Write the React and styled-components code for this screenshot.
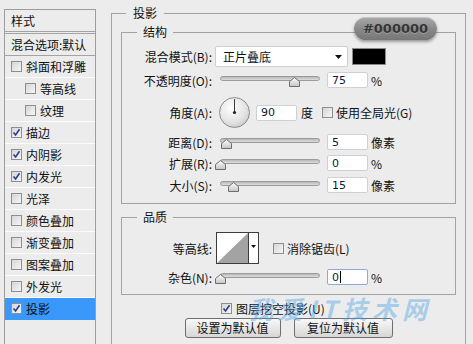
import React from 'react'
import styled, { createGlobalStyle } from 'styled-components'

const GlobalStyle = createGlobalStyle`
  html, body {
    margin: 0;
    padding: 0;
    background: #ececec;
  }
  body {
    font-family: "Noto Sans CJK SC", "Noto Sans", sans-serif;
    font-size: 12px;
    color: #111;
  }
`

const layers = [
    { name: '斜面和浮雕' },
    { name: '等高线', indent: true },
    { name: '纹理', indent: true },
    { name: '描边', checked: true },
    { name: '内阴影', checked: true },
    { name: '内发光', checked: true },
    { name: '光泽' },
    { name: '颜色叠加' },
    { name: '渐变叠加' },
    { name: '图案叠加' },
    { name: '外发光' },
    { name: '投影', checked: true, active: true },
]


function Check({ checked }) {
    return (
        <CheckBox>
            {checked &&
                <svg width="9" height="9" viewBox="0 0 9 9">
                    <path d="M1.5 4.5 L3.6 7 L7.5 1.2" fill="none" stroke="#27408f" strokeWidth="1.6" />
                </svg>
            }
        </CheckBox>
    )
}


function Slider({ pos }) {
    // pos: thumb centre, px from the left of the track
    return (
        <Track>
            <Thumb style={{ left: pos - 5 }} width="11" height="10" viewBox="0 0 11 10">
                <defs>
                    <linearGradient id="tg" x1="0" y1="0" x2="0" y2="1">
                        <stop offset="0" stopColor="#ffffff" />
                        <stop offset="1" stopColor="#c4c4c4" />
                    </linearGradient>
                </defs>
                <path d="M5.5 0.5 L10.5 4.5 L10.5 9.5 L0.5 9.5 L0.5 4.5 Z" fill="url(#tg)" stroke="#6e6e6e" />
            </Thumb>
        </Track>
    )
}


function Dial() {
    return (
        <DialIcon width="31" height="31" viewBox="0 0 31 31">
            <defs>
                <radialGradient id="dg" cx="0.4" cy="0.35" r="0.7">
                    <stop offset="0" stopColor="#ffffff" />
                    <stop offset="0.7" stopColor="#e2e2e2" />
                    <stop offset="1" stopColor="#c9c9c9" />
                </radialGradient>
            </defs>
            <circle cx="15.5" cy="15.5" r="15" fill="url(#dg)" stroke="#8c8c8c" />
            <line x1="15.5" y1="2" x2="15.5" y2="15.5" stroke="#3a3a3a" strokeWidth="1" />
            <circle cx="15.5" cy="15.5" r="1.6" fill="#222" />
        </DialIcon>
    )
}


function ContourPicker() {
    return (
        <Contour>
            <ContourCurve width="31" height="30" viewBox="0 0 31 30">
                <rect x="0" y="0" width="31" height="30" fill="#fff" />
                <path d="M0 30 L31 0 L31 30 Z" fill="#a3a3a3" />
            </ContourCurve>
            <ContourArrow>
                <svg width="5" height="3" viewBox="0 0 5 3">
                    <path d="M0 0 L5 0 L2.5 3 Z" fill="#111" />
                </svg>
            </ContourArrow>
        </Contour>
    )
}


export default function App() {

    return (
        <Page>
            <GlobalStyle />

            <Sidebar>
                <SideHeader>样式</SideHeader>
                <BlendItem>混合选项:默认</BlendItem>
                {layers.map(l => (
                    <LayerRow key={l.name} $indent={l.indent} $active={l.active}>
                        <Check checked={l.checked} />
                        <span>{l.name}</span>
                    </LayerRow>
                ))}
            </Sidebar>


            <Main>
                <OuterGroup>
                    <OuterLegend>投影</OuterLegend>

                    <Group $mt={1}>
                        <GroupLegend>结构</GroupLegend>

                        <FieldRow $h={21} $mt={5}>
                            <Label>混合模式(B):</Label>
                            <Select>
                                <span>正片叠底</span>
                                <svg width="7" height="4" viewBox="0 0 7 4">
                                    <path d="M0 0 L7 0 L3.5 4 Z" fill="#111" />
                                </svg>
                            </Select>
                            <Swatch />
                        </FieldRow>

                        <FieldRow $h={16} $mt={5}>
                            <Label>不透明度(O):</Label>
                            <Slider pos={74} />
                            <NumInput>75</NumInput>
                            <Unit>%</Unit>
                        </FieldRow>

                        <FieldRow $h={31} $mt={9}>
                            <Label>角度(A):</Label>
                            <Dial />
                            <NumInput $ml={6}>90</NumInput>
                            <Unit $ml={4}>度</Unit>
                            <InlineCheck $ml={9}>
                                <Check />
                                <span>使用全局光(G)</span>
                            </InlineCheck>
                        </FieldRow>

                        <FieldRow $h={16} $mt={6}>
                            <Label>距离(D):</Label>
                            <Slider pos={6} />
                            <NumInput>5</NumInput>
                            <Unit>像素</Unit>
                        </FieldRow>

                        <FieldRow $h={16} $mt={5}>
                            <Label>扩展(R):</Label>
                            <Slider pos={0} />
                            <NumInput>0</NumInput>
                            <Unit>%</Unit>
                        </FieldRow>

                        <FieldRow $h={16} $mt={6} $mb={10}>
                            <Label>大小(S):</Label>
                            <Slider pos={13} />
                            <NumInput>15</NumInput>
                            <Unit>像素</Unit>
                        </FieldRow>
                    </Group>


                    <Group $mt={4}>
                        <GroupLegend>品质</GroupLegend>

                        <FieldRow $h={32} $mt={6}>
                            <Label>等高线:</Label>
                            <ContourPicker />
                            <InlineCheck $ml={14}>
                                <Check />
                                <span>消除锯齿(L)</span>
                            </InlineCheck>
                        </FieldRow>

                        <FieldRow $h={16} $mt={5} $mb={9}>
                            <Label>杂色(N):</Label>
                            <Slider pos={0} />
                            <NumInput $focus>0<Caret /></NumInput>
                            <Unit>%</Unit>
                        </FieldRow>
                    </Group>


                    <KnockoutRow>
                        <Check checked />
                        <span>图层挖空投影(U)</span>
                    </KnockoutRow>

                    <ButtonRow>
                        <Button $w={96}>设置为默认值</Button>
                        <Button $w={99}>复位为默认值</Button>
                    </ButtonRow>
                </OuterGroup>
            </Main>


            <ColorBadge>#000000</ColorBadge>

            <Watermark>我爱IT技术网</Watermark>
        </Page>
    )
}




const Page = styled.div`
    position: relative;
    width: 473px;
    height: 344px;
    overflow: hidden;
    display: flex;
    align-items: flex-start;
    background: #ececec;
`

const Sidebar = styled.div`
    box-sizing: border-box;
    flex-shrink: 0;
    width: 92px;
    height: 345px;
    margin: 9px 0 0 4px;
    border: 1px solid #9d9d9d;
    line-height: 21px;
`

const SideHeader = styled.div`
    height: 21px;
    padding-left: 6px;
    border-bottom: 1px solid #a3a3a3;
    margin-bottom: 1px;
`

const BlendItem = styled.div`
    height: 21px;
    padding-left: 6px;
    white-space: nowrap;
    border-top: 1px solid #a3a3a3;
    border-bottom: 1px solid #a3a3a3;
`

const LayerRow = styled.div`
    display: flex;
    align-items: center;
    gap: 4px;
    height: 21px;
    padding-left: ${p => p.$indent ? 20 : 6}px;
    white-space: nowrap;
    background: ${p => p.$active ? '#3a98fb' : 'transparent'};
    border-bottom: 1px solid ${p => p.$active ? '#3a98fb' : '#fbfbfb'};
`

const CheckBox = styled.span`
    box-sizing: border-box;
    flex-shrink: 0;
    width: 11px;
    height: 11px;
    display: flex;
    align-items: center;
    justify-content: center;
    border: 1px solid #8e8e8e;
    background: linear-gradient(135deg, #d6d6d6, #f6f6f6);
`

const Main = styled.div`
    margin-left: 15px;
`

const OuterGroup = styled.fieldset`
    box-sizing: border-box;
    width: 355px;
    height: 360px;
    margin: 4px 0 0;
    padding: 0 9px;
    min-width: 0;
    border: 1px solid #a2a2a2;
`

const OuterLegend = styled.legend`
    margin-left: 5px;
    padding: 0 7px;
    line-height: 18px;
`

const Group = styled.fieldset`
    box-sizing: border-box;
    margin: ${p => p.$mt}px 0 0;
    padding: 0;
    min-width: 0;
    border: 1px solid #a2a2a2;
`

const GroupLegend = styled.legend`
    margin-left: 15px;
    padding: 0 6px;
    line-height: 18px;
`

const FieldRow = styled.div`
    display: flex;
    align-items: center;
    height: ${p => p.$h}px;
    margin-top: ${p => p.$mt}px;
    margin-bottom: ${p => p.$mb || 0}px;
    white-space: nowrap;
`

const Label = styled.div`
    flex-shrink: 0;
    width: 90px;
    margin-right: 3px;
    text-align: right;
`

const Select = styled.div`
    box-sizing: border-box;
    width: 133px;
    height: 21px;
    display: flex;
    align-items: center;
    justify-content: space-between;
    padding: 0 5px 0 7px;
    background: #fff;
    border: 1px solid #cfcfcf;
    border-radius: 2px;
    font-size: 12px;
`

const Swatch = styled.div`
    box-sizing: border-box;
    width: 34px;
    height: 17px;
    margin-left: 4px;
    background: #000;
    border: 1px solid #8a8a8a;
`

const Track = styled.div`
    position: relative;
    flex-shrink: 0;
    width: 100px;
    height: 16px;
    margin-left: 5px;

    &::before{
        content: '';
        position: absolute;
        left: 0;
        right: 0;
        top: 4px;
        height: 5px;
        box-sizing: border-box;
        border: 1px solid #9b9b9b;
        border-radius: 3px;
        background: linear-gradient(#b7b7b7, #dedede);
    }
`

const Thumb = styled.svg`
    position: absolute;
    top: 5px;
`

const DialIcon = styled.svg`
    flex-shrink: 0;
    margin-left: 4px;
`

const NumInput = styled.div`
    box-sizing: border-box;
    display: flex;
    align-items: center;
    width: 41px;
    height: 16px;
    margin-left: ${p => p.$ml || 7}px;
    padding-left: 4px;
    background: #fff;
    border: 1px solid ${p => p.$focus ? '#8eaad6' : '#cdd1d6'};
    border-radius: 2px;
    font-family: "DejaVu Sans", "Liberation Sans", sans-serif;
    font-size: 11px;
    color: #0d1a3a;
`

const Caret = styled.span`
    width: 1px;
    height: 12px;
    margin-left: 1px;
    background: #000;
`

const Unit = styled.span`
    margin-left: ${p => p.$ml || 3}px;
`

const InlineCheck = styled.div`
    display: flex;
    align-items: center;
    gap: 3px;
    margin-left: ${p => p.$ml}px;
`

const Contour = styled.div`
    display: flex;
    height: 32px;
    margin-left: 1px;
`

const ContourCurve = styled.svg`
    border: 1px solid #3c3c3c;
`

const ContourArrow = styled.div`
    box-sizing: border-box;
    width: 10px;
    height: 32px;
    display: flex;
    justify-content: center;
    padding-top: 12px;
    background: #fff;
    border: 1px solid #3c3c3c;
    border-left: none;
`

const KnockoutRow = styled.div`
    display: flex;
    align-items: center;
    gap: 4px;
    height: 16px;
    margin-top: 5px;
    padding-left: 100px;
    white-space: nowrap;
`

const ButtonRow = styled.div`
    display: flex;
    justify-content: center;
    gap: 13px;
    margin-top: 2px;
`

const Button = styled.button`
    box-sizing: border-box;
    width: ${p => p.$w}px;
    height: 20px;
    padding: 0;
    font-family: "Noto Sans CJK SC", sans-serif;
    font-size: 12px;
    line-height: 18px;
    color: #111;
    background: linear-gradient(#f8f8f8, #e6e6e6 55%, #d6d6d6);
    border: 1px solid #6f6f6f;
    border-radius: 3px;
`

const ColorBadge = styled.div`
    position: absolute;
    left: 354px;
    top: 17px;
    width: 83px;
    height: 23px;
    display: flex;
    align-items: center;
    justify-content: center;
    border-radius: 12px;
    background: linear-gradient(#a9a9a9, #8a8a8a 50%, #767676);
    box-shadow: 0 2px 3px rgba(0,0,0,0.35), inset 0 1px 0 rgba(255,255,255,0.35);
    font-family: "DejaVu Sans", sans-serif;
    font-weight: bold;
    font-size: 13px;
    color: #353535;
    text-shadow: 0 1px 0 rgba(255,255,255,0.25);
`

const Watermark = styled.div`
    position: absolute;
    left: 248px;
    top: 290px;
    font-family: "Noto Sans CJK SC", sans-serif;
    font-weight: bold;
    font-style: italic;
    font-size: 25px;
    letter-spacing: 5px;
    color: rgba(70, 160, 235, 0.42);
    pointer-events: none;
`
